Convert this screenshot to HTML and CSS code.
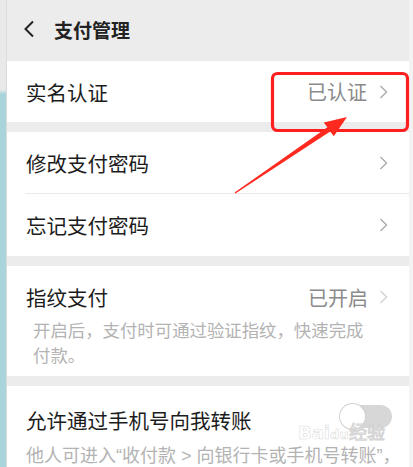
FILE: index.html
```html
<!DOCTYPE html>
<html lang="zh-CN">
<head>
<meta charset="utf-8">
<title>支付管理</title>
<link rel="stylesheet" href="styles.css">
</head>
<body>
<div class="frame">
	<div class="edge-left"></div>
	<div class="screen">
		<div class="topbar">
			<svg class="back" width="12" height="18" viewBox="0 0 12 18"><polyline points="10,1.5 2.5,9 10,16.5" fill="none" stroke="#222" stroke-width="2"/></svg>
			<h1>支付管理</h1>
		</div>

		<div class="group">
			<div class="row">
				<span class="label">实名认证</span>
				<span class="value">已认证</span>
				<svg class="chev" width="9" height="14" viewBox="0 0 9 14"><polyline points="1.5,1 7.5,7 1.5,13" fill="none" stroke="#ababab" stroke-width="1.4"/></svg>
			</div>
		</div>

		<div class="group">
			<div class="row tall line">
				<span class="label">修改支付密码</span>
				<svg class="chev" width="9" height="14" viewBox="0 0 9 14"><polyline points="1.5,1 7.5,7 1.5,13" fill="none" stroke="#ababab" stroke-width="1.4"/></svg>
			</div>
			<div class="row tall">
				<span class="label">忘记支付密码</span>
				<svg class="chev" width="9" height="14" viewBox="0 0 9 14"><polyline points="1.5,1 7.5,7 1.5,13" fill="none" stroke="#ababab" stroke-width="1.4"/></svg>
			</div>
		</div>

		<div class="group">
			<div class="row-tall finger">
				<div class="row-head">
					<span class="label">指纹支付</span>
					<span class="value">已开启</span>
					<svg class="chev" width="9" height="14" viewBox="0 0 9 14"><polyline points="1.5,1 7.5,7 1.5,13" fill="none" stroke="#d2d2d2" stroke-width="1.4"/></svg>
				</div>
				<p class="desc">开启后，支付时可通过验证指纹，快速完成付款。</p>
			</div>
		</div>

		<div class="group">
			<div class="row-tall phone">
				<div class="row-head">
					<span class="label">允许通过手机号向我转账</span>
					<span class="toggle"></span>
				</div>
				<p class="desc">他人可进入“收付款 &gt; 向银行卡或手机号转账”，</p>
			</div>
		</div>
	</div>
	<div class="edge-right"></div>

	<div class="watermark">Bai<span>du</span>经验</div>

	<svg class="mark" width="413" height="467" viewBox="0 0 413 467">
		<rect x="272.5" y="73.5" width="135" height="57" rx="5" fill="none" stroke="#ff1f1f" stroke-width="3.2"/>
		<polygon points="234.6,192.5 327.4,127.3 323.8,122.6 347,117 333.8,136.2 330.2,131.5 235.4,193.5" fill="#ff2a1f"/>
	</svg>
</div>
</body>
</html>
```

FILE: styles.css
```css
*{ margin:0; padding:0; box-sizing:border-box;}
body{ width:413px; height:467px; overflow:hidden; background:#fff; font-family:"Noto Sans CJK SC","Noto Sans",sans-serif;}
.frame{ position:relative; display:flex; width:413px; height:467px;}
.edge-left{ width:7px; flex:none; background:linear-gradient(to bottom,#e9e9e9 0,#e9e9e9 90px,#a8d4da 94px,#a8d4da 100%); border-right:1px solid #d9dcdc;}
.edge-right{ width:4px; flex:none; background:#f3f3f3;}
.screen{ flex:1; background:#ececec; display:flex; flex-direction:column; gap:10px; overflow:hidden;}

.topbar{ height:51px; flex:none; display:flex; align-items:center; padding:7px 0 0 16px; gap:19px;}
.topbar h1{ font-size:19px; font-weight:bold; color:#222;}

.group{ background:#fff; flex:none;}
.row{ height:61px; display:flex; align-items:center; padding:0 21px 0 19px;}
.row.tall{ height:62px;}
.row.line{ position:relative;}
.row.line:after{ content:""; position:absolute; left:18px; right:0; bottom:0; height:1px; background:#e9e9e9;}
.label{ font-size:20.5px; color:#1c1c1c; flex:1; white-space:nowrap;}
.value{ font-size:20px; color:#8a8a8a; margin-right:12px;}
.chev{ flex:none; display:block;}

.row-tall{ padding:17px 21px 9px 19px;}
.row-head{ height:28px; display:flex; align-items:center;}
.desc{ font-size:17.4px; line-height:25px; color:#b3b3b3;}
.finger .desc{ margin-top:6px; padding:0 8px 0 7px;}
.finger .value{ margin-right:11px;}
.phone{ padding-top:20px; padding-right:17px;}
.phone .desc{ margin-top:10px; font-family:"Liberation Sans","Noto Sans CJK SC",sans-serif; font-size:18px; line-height:24px; white-space:nowrap;}

.toggle{ position:relative; width:51px; height:23px; border-radius:12px; background:#d7d7d7; flex:none; margin-top:-7px;}
.toggle:after{ content:""; position:absolute; left:-1px; top:-1px; width:25px; height:25px; border-radius:50%; background:#fff; box-shadow:0 0 0 1px #d0d0d0;}

.watermark{ position:absolute; left:298px; top:418px; font-family:"DejaVu Sans",sans-serif; font-size:18px; font-weight:bold; color:rgba(255,255,255,0.8); -webkit-text-stroke:0.5px rgba(200,200,200,0.75);}
.watermark span{ font-size:13px;}

.mark{ position:absolute; left:0; top:0; pointer-events:none;}
```
